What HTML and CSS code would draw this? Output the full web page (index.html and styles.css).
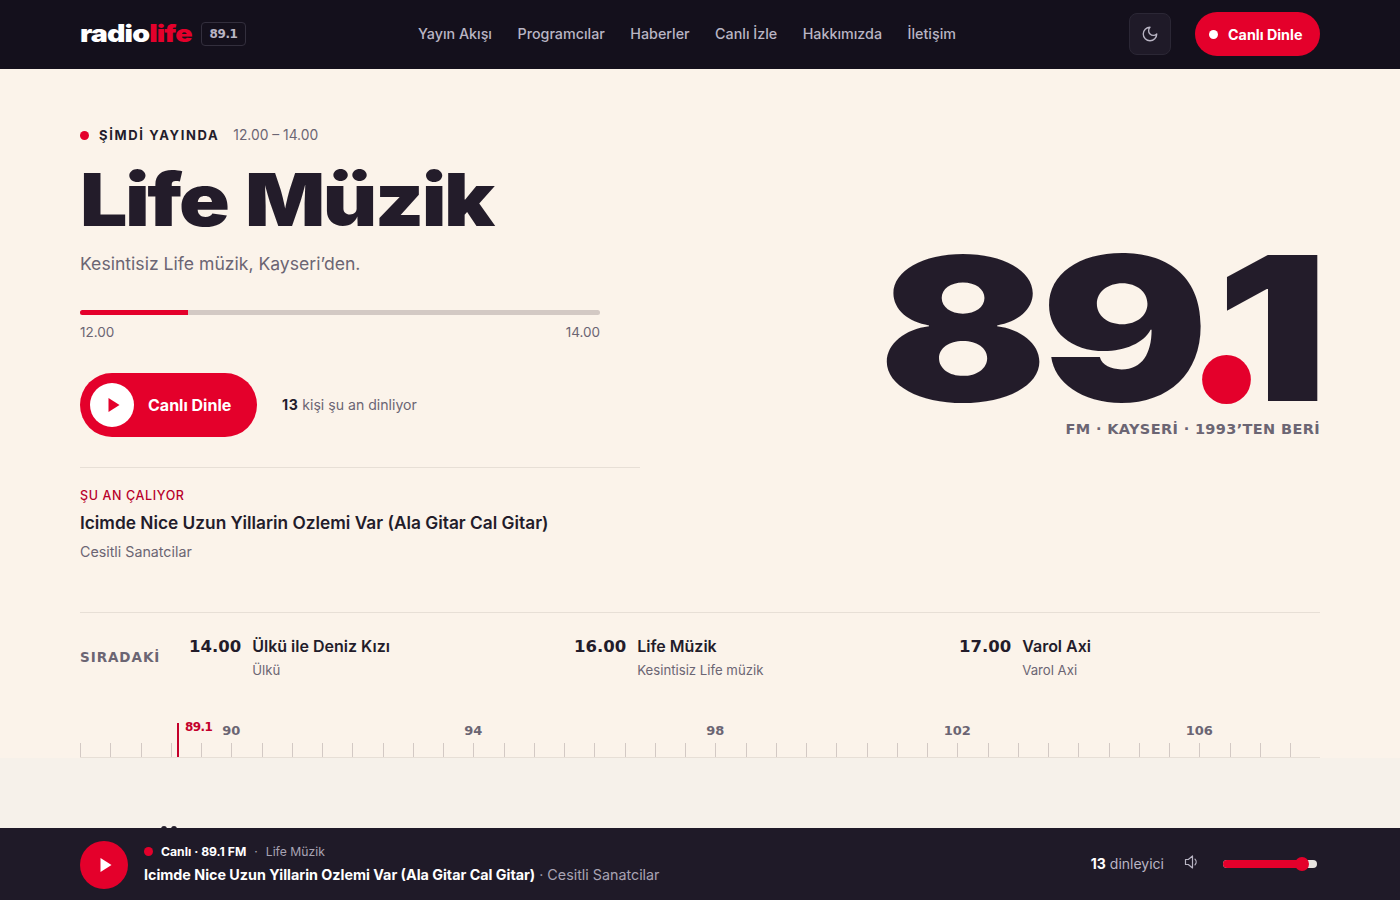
FILE: index.html
```html
<!DOCTYPE html>
<html lang="tr">
<head>
  <meta charset="UTF-8" />
  <title>Radio Life 89.1</title>
  <link rel="stylesheet" href="styles.css">
</head>
<body>
  <header class="topbar">
    <a class="logo" href="#">radio<span>life</span></a>
    <span class="freq-badge">89.1</span>
    <nav class="nav">
      <a href="#">Yayın Akışı</a>
      <a href="#">Programcılar</a>
      <a href="#">Haberler</a>
      <a href="#">Canlı İzle</a>
      <a href="#">Hakkımızda</a>
      <a href="#">İletişim</a>
    </nav>
    <div class="topbar-right">
      <button class="theme-btn" aria-label="Tema">
        <svg width="18" height="18" viewBox="0 0 24 24" fill="none" stroke="currentColor" stroke-width="1.8" stroke-linecap="round" stroke-linejoin="round"><path d="M12 3a6 6 0 0 0 9 9 9 9 0 1 1-9-9Z"/></svg>
      </button>
      <a class="listen-btn" href="#"><i></i>Canlı Dinle</a>
    </div>
  </header>

  <main class="page">
    <section class="hero">
      <div class="hero-left">
        <div class="onair"><i></i><strong>ŞİMDİ YAYINDA</strong><span>12.00 – 14.00</span></div>
        <h1>Life Müzik</h1>
        <p class="lead">Kesintisiz Life müzik, Kayseri’den.</p>
        <div class="progress"><div class="progress-fill" style="width:20.8%"></div></div>
        <div class="progress-labels"><span>12.00</span><span>14.00</span></div>
        <div class="cta-row">
          <a class="play-cta" href="#">
            <span class="play-circle"><svg width="14" height="14" viewBox="0 0 14 14"><path d="M1.5 0l11 7-11 7z" fill="#e4002b"/></svg></span>
            Canlı Dinle
          </a>
          <p class="listeners"><b>13</b> kişi şu an dinliyor</p>
        </div>
        <div class="playing">
          <div class="playing-label">ŞU AN ÇALIYOR</div>
          <div class="playing-title">Icimde Nice Uzun Yillarin Ozlemi Var (Ala Gitar Cal Gitar)</div>
          <div class="playing-artist">Cesitli Sanatcilar</div>
        </div>
      </div>
      <div class="hero-right">
        <div class="big-freq">89<span class="dot"></span>1</div>
        <div class="freq-sub">FM · KAYSERİ · 1993’TEN BERİ</div>
      </div>
    </section>

    <section class="upnext">
      <div class="upnext-label">SIRADAKİ</div>
      <div class="upnext-items">
        <div class="upnext-item"><span class="time">14.00</span><div><div class="show">Ülkü ile Deniz Kızı</div><div class="host">Ülkü</div></div></div>
        <div class="upnext-item"><span class="time">16.00</span><div><div class="show">Life Müzik</div><div class="host">Kesintisiz Life müzik</div></div></div>
        <div class="upnext-item"><span class="time">17.00</span><div><div class="show">Varol Axi</div><div class="host">Varol Axi</div></div></div>
      </div>
    </section>

    <section class="dial">
      <div class="dial-marker"><span>89.1</span></div>
      <div class="dial-ticks" id="ticks"></div>
    </section>
  </main>

  <!-- next section starts under the player, only its top edge shows -->
  <section class="below"><i></i><i></i></section>

  <footer class="player">
    <button class="player-play" aria-label="Oynat"><svg width="14" height="14" viewBox="0 0 14 14"><path d="M1.5 0l11 7-11 7z" fill="#fff"/></svg></button>
    <div class="player-info">
      <div class="player-top"><i></i><strong>Canlı · 89.1 FM</strong><em>·</em><span>Life Müzik</span></div>
      <div class="player-song"><strong>Icimde Nice Uzun Yillarin Ozlemi Var (Ala Gitar Cal Gitar)</strong> · Cesitli Sanatcilar</div>
    </div>
    <div class="player-right">
      <span class="player-count"><b>13</b> dinleyici</span>
      <svg class="vol-icon" width="16" height="16" viewBox="0 0 16 16" fill="none" stroke="currentColor" stroke-width="1.2" stroke-linejoin="round" stroke-linecap="round"><path d="M1.5 5.5h2.8L8.5 2v12L4.3 10.5H1.5z"/><path d="M11 5.2a4 4 0 0 1 0 5.6"/></svg>
      <div class="volume"><div class="volume-fill"><i></i></div></div>
    </div>
  </footer>

  <script>
    // 87.5 - 107.5 MHz, one tick per 0.5
    var ticks = document.getElementById('ticks');
    for (var i = 0; i < 41; i++) {
      var mhz = 87.5 + i * 0.5;
      var cell = document.createElement('div');
      cell.className = 'tick';
      if (mhz % 4 === 2) {
        cell.innerHTML = '<span>' + mhz + '</span>';
      }
      ticks.appendChild(cell);
    }
  </script>
</body>
</html>
```

FILE: styles.css
```css
* {
  box-sizing: border-box;
}
body {
  margin: 0;
  background-color: #fbf3ea;
  color: #231c2a;
  font-family: 'Inter', 'Noto Sans', sans-serif;
  padding-bottom: 72px;
}
a {
  text-decoration: none;
  color: inherit;
}
button {
  border: 0;
  padding: 0;
  font: inherit;
  cursor: pointer;
}
.topbar {
  height: 69px;
  background-color: #14101c;
  padding: 0 80px 1px;
  display: flex;
  align-items: center;
  position: relative;
}
.logo {
  display: block;
  font-size: 24px;
  font-weight: 900;
  letter-spacing: -0.03em;
  color: #fff;
  width: 112px;
  margin-bottom: 2px;
  transform: scaleX(1.19);
  transform-origin: left;
}
.logo span {
  color: #e4002b;
}
.freq-badge {
  margin-left: 9px;
  width: 45px;
  height: 24px;
  border: 1px solid #332f3d;
  border-radius: 4px;
  color: #b9b5c4;
  font-family: 'DejaVu Sans', sans-serif;
  font-size: 12px;
  font-weight: 700;
  letter-spacing: -0.03em;
  display: flex;
  align-items: center;
  justify-content: center;
}
.nav {
  margin-left: 172px;
  margin-bottom: 2px;
  display: flex;
  gap: 25.5px;
  font-size: 14.3px;
  font-weight: 500;
  color: #b9b5c4;
}
.topbar-right {
  margin-left: auto;
  display: flex;
  align-items: center;
  gap: 24px;
}
.theme-btn {
  width: 42px;
  height: 42px;
  border-radius: 8px;
  border: 1px solid #2b2735;
  background-color: #1f1a28;
  color: #b9b5c4;
  display: flex;
  align-items: center;
  justify-content: center;
}
.listen-btn {
  width: 125px;
  height: 44px;
  border-radius: 22px;
  background-color: #e4002b;
  color: #fff;
  font-size: 14.3px;
  font-weight: 700;
  display: flex;
  align-items: center;
  padding-left: 14px;
  gap: 10px;
}
.listen-btn i {
  width: 9px;
  height: 9px;
  border-radius: 50%;
  background-color: #fff;
}
.page {
  padding: 0 80px;
}
.hero {
  display: flex;
  justify-content: space-between;
  align-items: center;
  padding: 55px 0 51px;
  height: 544px;
  border-bottom: 1px solid #e7dfd6;
}
.hero-left {
  width: 560px;
}
.onair {
  display: flex;
  align-items: center;
  height: 20px;
  font-size: 13px;
}
.onair i {
  width: 9px;
  height: 9px;
  border-radius: 50%;
  background-color: #e4002b;
  margin-right: 10px;
}
.onair strong {
  letter-spacing: 0.125em;
  font-weight: 700;
  margin-right: 14px;
}
.onair span {
  font-size: 13.8px;
  color: #6b6573;
}
h1 {
  margin: 15px 0 0;
  font-size: 73px;
  line-height: 80px;
  font-weight: 900;
  letter-spacing: -0.03em;
  word-spacing: 0.04em;
  transform: scaleX(1.15);
  transform-origin: left;
}
.lead {
  margin: 11px 0 0;
  font-size: 17.6px;
  line-height: 26px;
  color: #6b6573;
}
.progress {
  width: 520px;
  height: 5px;
  margin-top: 33px;
  background-color: #d3c9c4;
  border-radius: 3px;
  overflow: hidden;
}
.progress-fill {
  height: 100%;
  background-color: #e4002b;
}
.progress-labels {
  width: 520px;
  margin-top: 9px;
  display: flex;
  justify-content: space-between;
  font-size: 13.5px;
  color: #6b6573;
}
.cta-row {
  display: flex;
  align-items: center;
  gap: 25px;
  margin-top: 33px;
}
.play-cta {
  width: 177px;
  height: 64px;
  border-radius: 32px;
  background-color: #e4002b;
  color: #fff;
  font-size: 16px;
  font-weight: 700;
  display: flex;
  align-items: center;
  padding-left: 10px;
  gap: 14px;
}
.play-circle {
  width: 44px;
  height: 44px;
  border-radius: 50%;
  background-color: #fff;
  display: flex;
  align-items: center;
  justify-content: center;
  padding-left: 4px;
}
.listeners {
  margin: 0 0 2px;
  font-size: 14.1px;
  color: #6b6573;
}
.listeners b {
  color: #231c2a;
  letter-spacing: 0.04em;
}
.playing {
  margin-top: 30px;
  padding-top: 20px;
  border-top: 1px solid #e7dfd6;
}
.playing-label {
  font-size: 12.5px;
  font-weight: 500;
  letter-spacing: 0.05em;
  color: #b8002a;
}
.playing-title {
  margin-top: 9px;
  font-size: 17.3px;
  font-weight: 600;
}
.playing-artist {
  margin-top: 10px;
  font-size: 14.25px;
  color: #6b6573;
}
.hero-right {
  text-align: right;
}
.big-freq {
  font-size: 200px;
  line-height: 172px;
  font-weight: 900;
  letter-spacing: -0.03em;
  margin-right: -2px;
  transform: translateY(-7px) scaleX(1.25);
  transform-origin: right;
}
.big-freq .dot {
  display: inline-block;
  width: 39px;
  height: 49px;
  border-radius: 50%;
  background-color: #e4002b;
  margin: 0 -27.6px 0 0;
  vertical-align: -3px;
}
.freq-sub {
  font-family: 'DejaVu Sans', sans-serif;
  font-size: 14.5px;
  font-weight: 700;
  letter-spacing: 0.025em;
  color: #6b6573;
}
.upnext {
  display: flex;
  align-items: center;
  height: 88px;
}
.upnext-label {
  flex: none;
  width: 109px;
  font-family: 'DejaVu Sans', sans-serif;
  font-size: 13.5px;
  font-weight: 700;
  letter-spacing: 0.07em;
  color: #6b6573;
}
.upnext-items {
  flex: 1;
  display: grid;
  grid-template-columns: 385px 385px 1fr;
  padding-bottom: 2px;
}
.upnext-item {
  display: flex;
  gap: 11px;
}
.time {
  font-family: 'DejaVu Sans', sans-serif;
  font-size: 16.5px;
  font-weight: 700;
  line-height: 24px;
  padding-top: 1px;
}
.show {
  font-size: 16px;
  font-weight: 600;
  line-height: 24px;
}
.host {
  margin-top: 4px;
  font-size: 13.2px;
  color: #6b6573;
}
.dial {
  position: relative;
  height: 57px;
  border-bottom: 1px solid #e7dfd6;
}
.dial-ticks {
  position: absolute;
  left: 0;
  right: 0;
  bottom: 0;
  display: flex;
}
.tick {
  flex: 1;
  height: 14px;
  border-left: 1px solid #d3c9c4;
  position: relative;
}
.tick span {
  position: absolute;
  left: -1px;
  bottom: 19px;
  transform: translateX(-50%);
  font-family: 'DejaVu Sans', sans-serif;
  font-size: 13px;
  font-weight: 700;
  color: #6b6573;
}
.dial-marker {
  position: absolute;
  left: 97px;
  top: 22px;
  bottom: 0;
  width: 2px;
  background-color: #c4002b;
}
.dial-marker span {
  position: absolute;
  left: 8px;
  top: -3px;
  font-family: 'DejaVu Sans', sans-serif;
  font-size: 12px;
  font-weight: 700;
  letter-spacing: -0.05em;
  color: #c4002b;
}
.below {
  height: 70px;
  overflow: hidden;
  background-color: #f6f1ea;
  padding: 68px 0 0 161px;
  display: flex;
  gap: 4px;
}
.below i {
  width: 6px;
  height: 6px;
  border-radius: 50%;
  background-color: #231c2a;
}
.player {
  position: fixed;
  left: 0;
  right: 0;
  bottom: 0;
  height: 72px;
  background-color: #1f1a28;
  color: #fff;
  padding: 0 80px;
  display: flex;
  align-items: center;
  gap: 16px;
}
.player-play {
  width: 48px;
  height: 48px;
  margin-top: 2px;
  padding-left: 3px;
  border-radius: 50%;
  background-color: #e4002b;
  display: flex;
  align-items: center;
  justify-content: center;
}
.player-info {
  margin-bottom: 2px;
}
.player-top {
  display: flex;
  align-items: center;
  font-size: 12.2px;
  color: #a8a3b3;
}
.player-top i {
  width: 9px;
  height: 9px;
  border-radius: 50%;
  background-color: #e4002b;
  margin-right: 8px;
}
.player-top strong {
  color: #fff;
  font-weight: 700;
}
.player-top em {
  font-style: normal;
  margin: 0 8px;
}
.player-song {
  margin-top: 7px;
  font-size: 14.3px;
  color: #a8a3b3;
}
.player-song strong {
  color: #fff;
  font-weight: 700;
}
.player-right {
  margin-left: auto;
  display: flex;
  align-items: center;
}
.player-count {
  font-size: 14px;
  margin-bottom: 2px;
  color: #b9b5c4;
}
.player-count b {
  color: #fff;
}
.vol-icon {
  margin-left: 20px;
  color: #b9b5c4;
  margin-top: -4px;
}
.volume {
  margin-left: 23px;
  margin-right: 3px;
  width: 94px;
  height: 8px;
  border-radius: 4px;
  background-color: #e8e4e0;
}
.volume-fill {
  width: 84%;
  height: 100%;
  border-radius: 4px;
  background-color: #e4002b;
  position: relative;
}
.volume-fill i {
  position: absolute;
  right: -7px;
  top: -3px;
  width: 14px;
  height: 14px;
  border-radius: 50%;
  background-color: #e4002b;
}
```
